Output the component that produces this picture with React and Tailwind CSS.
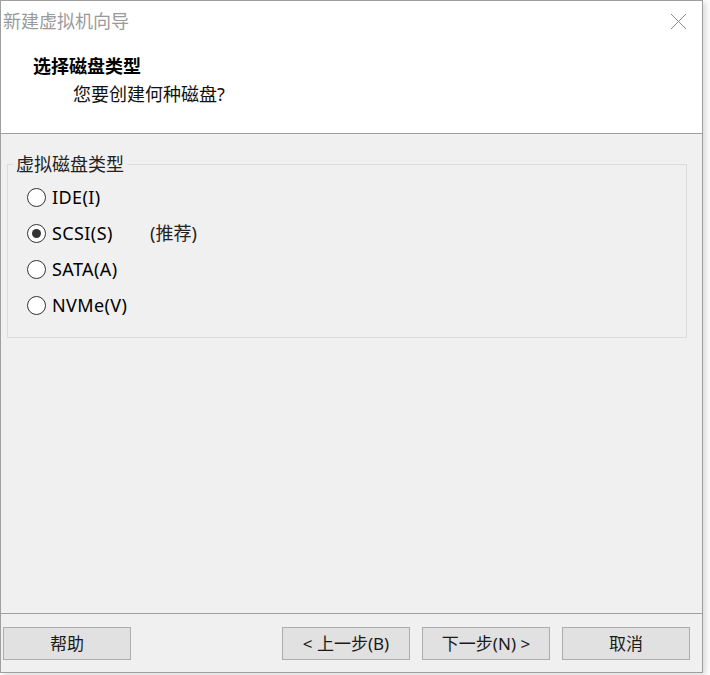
import React, { useState } from 'react';

const font = { fontFamily: '"Noto Sans", "Noto Sans CJK SC", sans-serif' };

const options = [
  { id: 'ide', label: 'IDE(I)' },
  { id: 'scsi', label: 'SCSI(S)', note: '(推荐)' },
  { id: 'sata', label: 'SATA(A)' },
  { id: 'nvme', label: 'NVMe(V)' },
];

const Radio = ({ checked }) => (
  <span className="w-[19px] h-[19px] rounded-full border border-[#333333] bg-white flex items-center justify-center shrink-0">
    {checked && <span className="w-[9px] h-[9px] rounded-full bg-[#333333]"></span>}
  </span>
);

const Button = ({ children }) => (
  <button className="w-[128px] h-[33px] bg-[#e1e1e1] border border-[#adadad] text-[17px] text-[#1a1a1a] flex items-center justify-center">
    {children}
  </button>
);

const App = () => {
  const [selected, setSelected] = useState('scsi');

  return (
    <div className="w-[710px] h-[675px] bg-white" style={font}>
      <div className="w-[703px] h-[673px] border border-[#9f9f9f] bg-[#f0f0f0] flex flex-col shadow-[3px_2px_6px_rgba(0,0,0,0.15)]">
        {/* header */}
        <div className="h-[133px] bg-white border-b border-[#a0a0a0] shrink-0">
          <div className="flex items-center justify-between h-[42px] pl-[2px] pr-[15px]">
            <span className="text-[18px] text-[#9a9a9a] -mt-[2px]">新建虚拟机向导</span>
            <svg width="17" height="17" viewBox="0 0 17 17" className="mb-[1px]">
              <path d="M1 1 L16 16 M16 1 L1 16" stroke="#8a8a8a" strokeWidth="1" fill="none" />
            </svg>
          </div>
          <div className="ml-[32px] mt-[12px] text-[18px] font-bold text-black leading-[22px]">选择磁盘类型</div>
          <div className="ml-[72px] mt-[6px] text-[18px] text-[#111] leading-[22px]">您要创建何种磁盘?</div>
        </div>

        {/* body */}
        <div className="flex-1 pt-[18px]">
          <fieldset className="ml-[6px] w-[680px] h-[186px] border border-[#dcdcdc]">
            <legend className="ml-[5px] px-[3px] text-[18px] leading-[24px] text-[#222]">虚拟磁盘类型</legend>
            <div className="flex flex-col gap-[13px] pl-[19px] pt-[10px]">
              {options.map((o) => (
                <label key={o.id} className="flex items-center h-[23px] cursor-default" onClick={() => setSelected(o.id)}>
                  <Radio checked={selected === o.id} />
                  <span className="ml-[6px] text-[18px] tracking-[0.4px] text-black w-[98px]">{o.label}</span>
                  {o.note && <span className="text-[18px] text-[#222]">{o.note}</span>}
                </label>
              ))}
            </div>
          </fieldset>
        </div>

        {/* footer */}
        <div className="h-[59px] border-t border-[#a0a0a0] shrink-0 flex items-start pt-[13px] pl-[2px] pr-[12px]">
          <Button>帮助</Button>
          <div className="ml-auto flex gap-[12px]">
            <Button>&lt; 上一步(B)</Button>
            <Button>下一步(N) &gt;</Button>
            <Button>取消</Button>
          </div>
        </div>
      </div>
    </div>
  );
};

export default App;
